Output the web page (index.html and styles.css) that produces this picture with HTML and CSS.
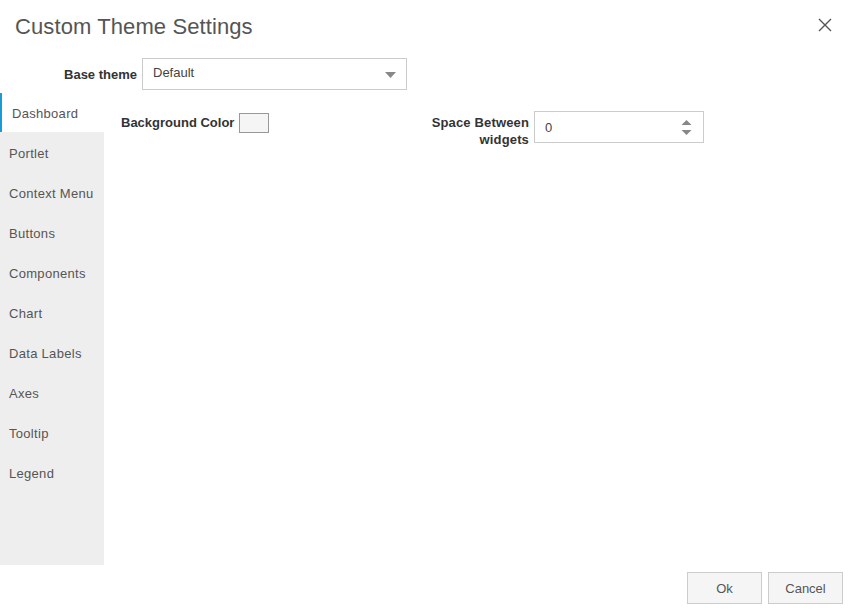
FILE: index.html
```html
<!DOCTYPE html>
<html>
<head>
<meta charset="utf-8">
<link rel="stylesheet" href="styles.css">
</head>
<body>
<div class="dialog">
  <div class="header">
    <div class="title">Custom Theme Settings</div>
    <button class="close" aria-label="Close">
      <svg width="14" height="14" viewBox="0 0 14 14"><path d="M1 1 L13 13 M13 1 L1 13" stroke="#555" stroke-width="1.4" fill="none"/></svg>
    </button>
  </div>
  <div class="base-row">
    <label class="base-label">Base theme</label>
    <div class="select">
      <span class="select-text">Default</span>
      <svg class="caret" width="11" height="6" viewBox="0 0 11 6"><path d="M0 0 H11 L5.5 6 Z" fill="#888"/></svg>
    </div>
  </div>
  <div class="main">
    <ul class="tabs">
      <li class="tab active">Dashboard</li>
      <li class="tab">Portlet</li>
      <li class="tab">Context Menu</li>
      <li class="tab">Buttons</li>
      <li class="tab">Components</li>
      <li class="tab">Chart</li>
      <li class="tab">Data Labels</li>
      <li class="tab">Axes</li>
      <li class="tab">Tooltip</li>
      <li class="tab">Legend</li>
    </ul>
    <div class="content">
      <div class="field field-color">
        <span class="label">Background Color</span>
        <span class="swatch"></span>
      </div>
      <div class="field field-space">
        <span class="label label-right">Space Between widgets</span>
        <div class="number">
          <span class="number-text">0</span>
          <svg class="spin" width="11" height="15" viewBox="0 0 11 15"><path d="M0.5 5 L5.5 0 L10.5 5 Z M0.5 10 H10.5 L5.5 15 Z" fill="#888"/></svg>
        </div>
      </div>
    </div>
  </div>
  <div class="footer">
    <button class="btn">Ok</button>
    <button class="btn">Cancel</button>
  </div>
</div>
</body>
</html>
```

FILE: styles.css
```css
html, body {
  margin: 0;
  padding: 0;
  background: #fff;
}
body {
  font-family: "Liberation Sans", Arial, sans-serif;
  font-size: 13px;
  color: #555;
}
.dialog {
  width: 849px;
  height: 610px;
  display: flex;
  flex-direction: column;
}
.header {
  height: 52px;
  display: flex;
  align-items: flex-start;
  justify-content: space-between;
  padding: 0 17px 0 15px;
  box-sizing: border-box;
}
.title {
  font-size: 22px;
  line-height: 26px;
  padding-top: 14px;
  color: #555;
  letter-spacing: 0.1px;
}
.close {
  border: 0;
  background: none;
  padding: 0;
  margin-top: 18px;
  width: 14px;
  height: 14px;
  display: flex;
}
.base-row {
  display: flex;
  align-items: center;
  height: 32px;
  margin-top: 6px;
}
.base-label {
  width: 137px;
  text-align: right;
  font-weight: bold;
  color: #333;
  padding-top: 1px;
}
.select {
  margin-left: 5px;
  width: 265px;
  height: 32px;
  box-sizing: border-box;
  border: 1px solid #ccc;
  display: flex;
  align-items: center;
  justify-content: space-between;
  padding: 0 10px;
}
.select-text {
  color: #444;
  margin-top: -3px;
}
.caret {
  margin-top: 2px;
}
.main {
  display: flex;
  margin-top: 3px;
  height: 472px;
}
.tabs {
  list-style: none;
  margin: 0;
  padding: 0;
  width: 104px;
  background: #eee;
  flex-shrink: 0;
}
.tab {
  height: 40px;
  box-sizing: border-box;
  padding-top: 4px;
  line-height: 36px;
  padding-left: 9px;
  color: #555;
  white-space: nowrap;
  letter-spacing: 0.3px;
}
.tab.active {
  background: #fff;
  height: 39px;
  padding-top: 3px;
  line-height: 35px;
  padding-left: 10px;
  border-left: 2px solid #1a9bd7;
}
.content {
  flex: 1;
  display: grid;
  grid-template-columns: 300px 300px;
  align-items: start;
  align-content: start;
  padding: 18px 0 0 17px;
}
.field {
  display: flex;
  align-items: flex-start;
}
.label {
  font-weight: bold;
  color: #333;
  line-height: 17px;
}
.field-color {
  padding-top: 2px;
}
.field-color .label {
  line-height: 19px;
}
.swatch {
  margin-left: 5px;
  width: 30px;
  height: 20px;
  box-sizing: border-box;
  border: 1px solid #999;
  background: #f5f5f5;
}
.label-right {
  width: 110px;
  text-align: right;
  padding-top: 3px;
  margin-left: -2px;
  letter-spacing: 0.15px;
}
.number {
  margin-left: 5px;
  width: 170px;
  height: 32px;
  box-sizing: border-box;
  border: 1px solid #ccc;
  display: flex;
  align-items: center;
  justify-content: space-between;
  padding: 0 11px 0 10px;
}
.number-text {
  color: #444;
}
.footer {
  display: flex;
  justify-content: flex-end;
  gap: 6px;
  padding: 7px 6px 0 0;
}
.btn {
  width: 75px;
  height: 32px;
  box-sizing: border-box;
  border: 1px solid #ccc;
  background: #f5f5f5;
  font-family: "Liberation Sans", Arial, sans-serif;
  font-size: 13px;
  color: #555;
  padding: 0;
}
```
